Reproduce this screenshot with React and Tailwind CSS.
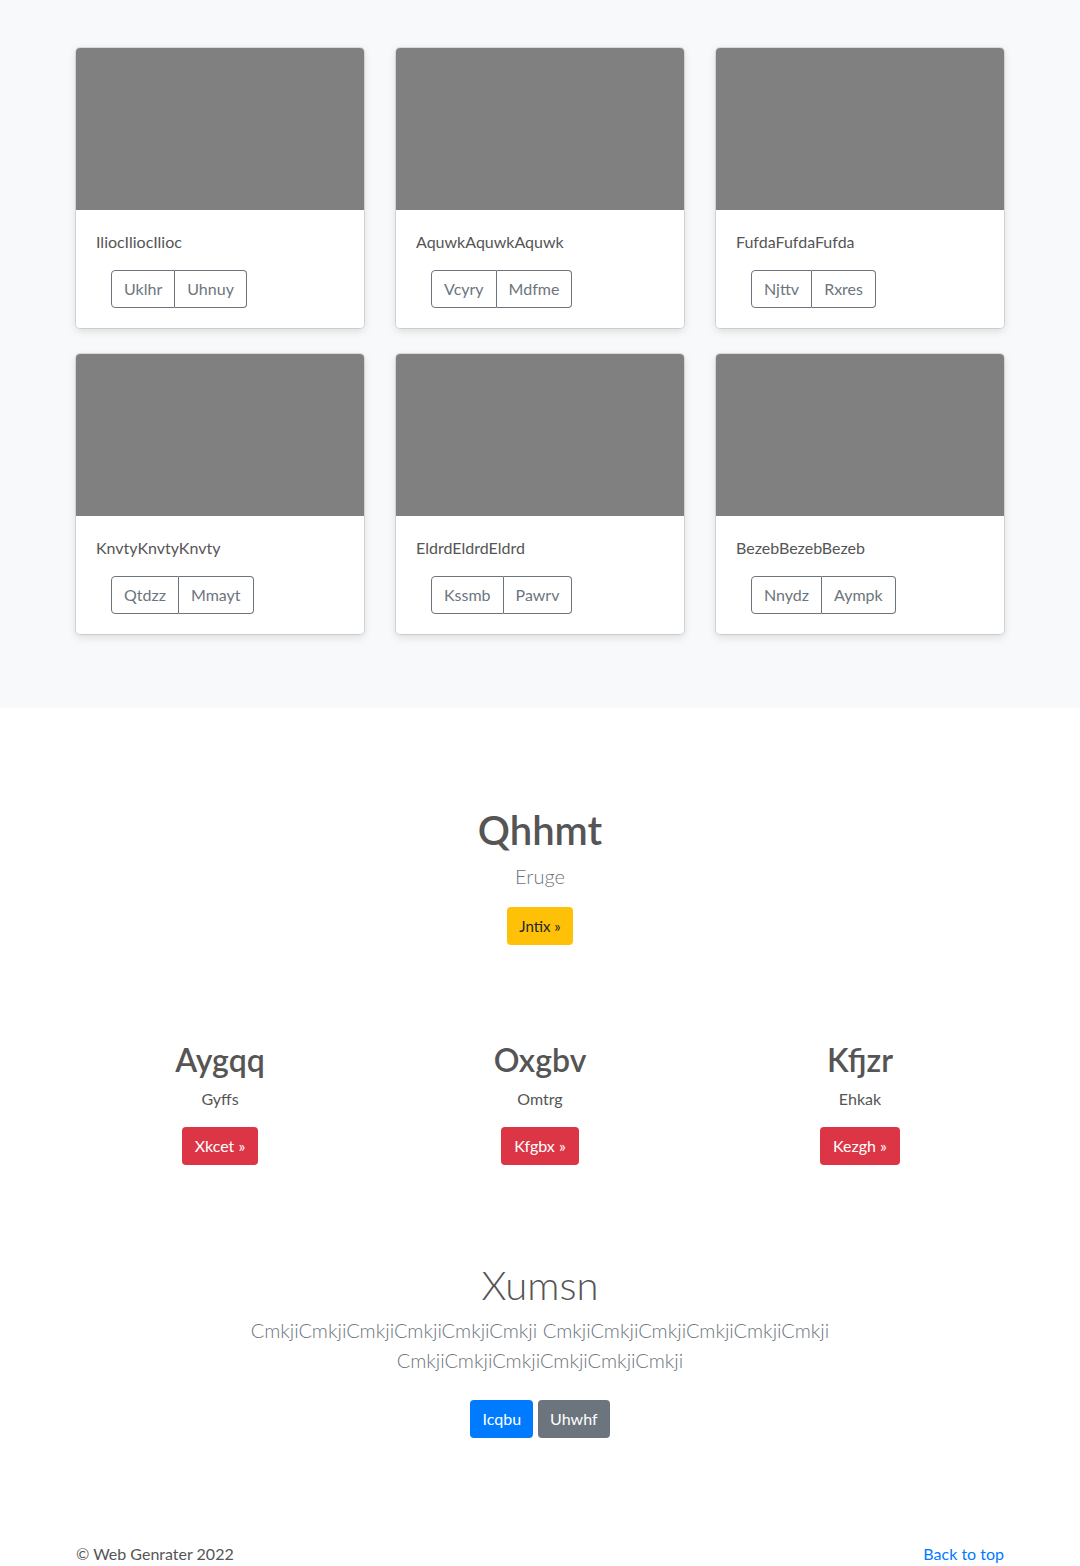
const cards = [
  { title: "IliocIliocIlioc", a: "Uklhr", b: "Uhnuy" },
  { title: "AquwkAquwkAquwk", a: "Vcyry", b: "Mdfme" },
  { title: "FufdaFufdaFufda", a: "Njttv", b: "Rxres" },
  { title: "KnvtyKnvtyKnvty", a: "Qtdzz", b: "Mmayt" },
  { title: "EldrdEldrdEldrd", a: "Kssmb", b: "Pawrv" },
  { title: "BezebBezebBezeb", a: "Nnydz", b: "Aympk" },
];

const cols = [
  { h: "Aygqq", p: "Gyffs", btn: "Xkcet" },
  { h: "Oxgbv", p: "Omtrg", btn: "Kfgbx" },
  { h: "Kfjzr", p: "Ehkak", btn: "Kezgh" },
];

function Card({ title, a, b }) {
  return (
    <div className="bg-white rounded ring-1 ring-black/10 shadow-[0_3px_10px_rgba(0,0,0,0.13)] overflow-hidden">
      <div className="h-[162px] bg-[#808080]" />
      <div className="p-5">
        <p className="text-[16px] leading-6 text-[#555] mb-4">{title}</p>
        <div className="ml-[15px] inline-flex text-[16px] text-[#6c757d]">
          <button className="h-[38px] px-3 border border-[#6c757d] rounded-l">{a}</button>
          <button className="h-[38px] px-3 border border-l-0 border-[#6c757d] rounded-r">{b}</button>
        </div>
      </div>
    </div>
  );
}

export default function App() {
  const para = "CmkjiCmkjiCmkjiCmkjiCmkjiCmkji";
  return (
    <div className="min-h-[1566px] bg-white text-[#555] font-['Lato',sans-serif]">
      <section className="bg-[#f8f9fa] pt-12 pb-[74px]">
        <div className="w-[960px] mx-auto grid grid-cols-3 gap-y-[26px]">
          {cards.map((c) => (
            <div key={c.title} className="px-4">
              <Card {...c} />
            </div>
          ))}
        </div>
      </section>

      <section className="pt-[98px] text-center">
        <h1 className="text-[40px] leading-[48px] font-semibold text-[#555] mb-[7px]">Qhhmt</h1>
        <p className="text-[20px] leading-[30px] font-light text-[#6c757d] mb-4">Eruge</p>
        <button className="h-[38px] px-3 rounded bg-[#ffc107] text-[#212529] text-[15px]">Jntix »</button>
      </section>

      <section className="pt-[96px] w-[960px] mx-auto grid grid-cols-3 text-center">
        {cols.map((c) => (
          <div key={c.h} className="px-4">
            <h2 className="text-[32px] leading-[38px] font-semibold text-[#555] mb-2">{c.h}</h2>
            <p className="text-[16px] leading-6 text-[#555] mb-4">{c.p}</p>
            <button className="h-[38px] px-[13px] rounded bg-[#dc3545] text-white text-[16px]">{c.btn} »</button>
          </div>
        ))}
      </section>

      <section className="pt-[96px] text-center">
        <h1 className="text-[40px] leading-[48px] font-light text-[#555] mb-[6px]">Xumsn</h1>
        <p className="max-w-[600px] mx-auto text-[20px] leading-[30px] font-light text-[#6c757d] mb-[25px]">
          {para} {para} {para}
        </p>
        <div className="flex justify-center gap-[5px]">
          <button className="h-[38px] px-3 rounded bg-[#007bff] text-white text-[16px]">Icqbu</button>
          <button className="h-[38px] px-3 rounded bg-[#6c757d] text-white text-[16px]">Uhwhf</button>
        </div>
      </section>

      <footer className="pt-[104px] w-[928px] mx-auto flex justify-between text-[16px] leading-6">
        <p className="text-[#555]">© Web Genrater 2022</p>
        <a href="#" className="text-[#007bff]">Back to top</a>
      </footer>
    </div>
  );
}
